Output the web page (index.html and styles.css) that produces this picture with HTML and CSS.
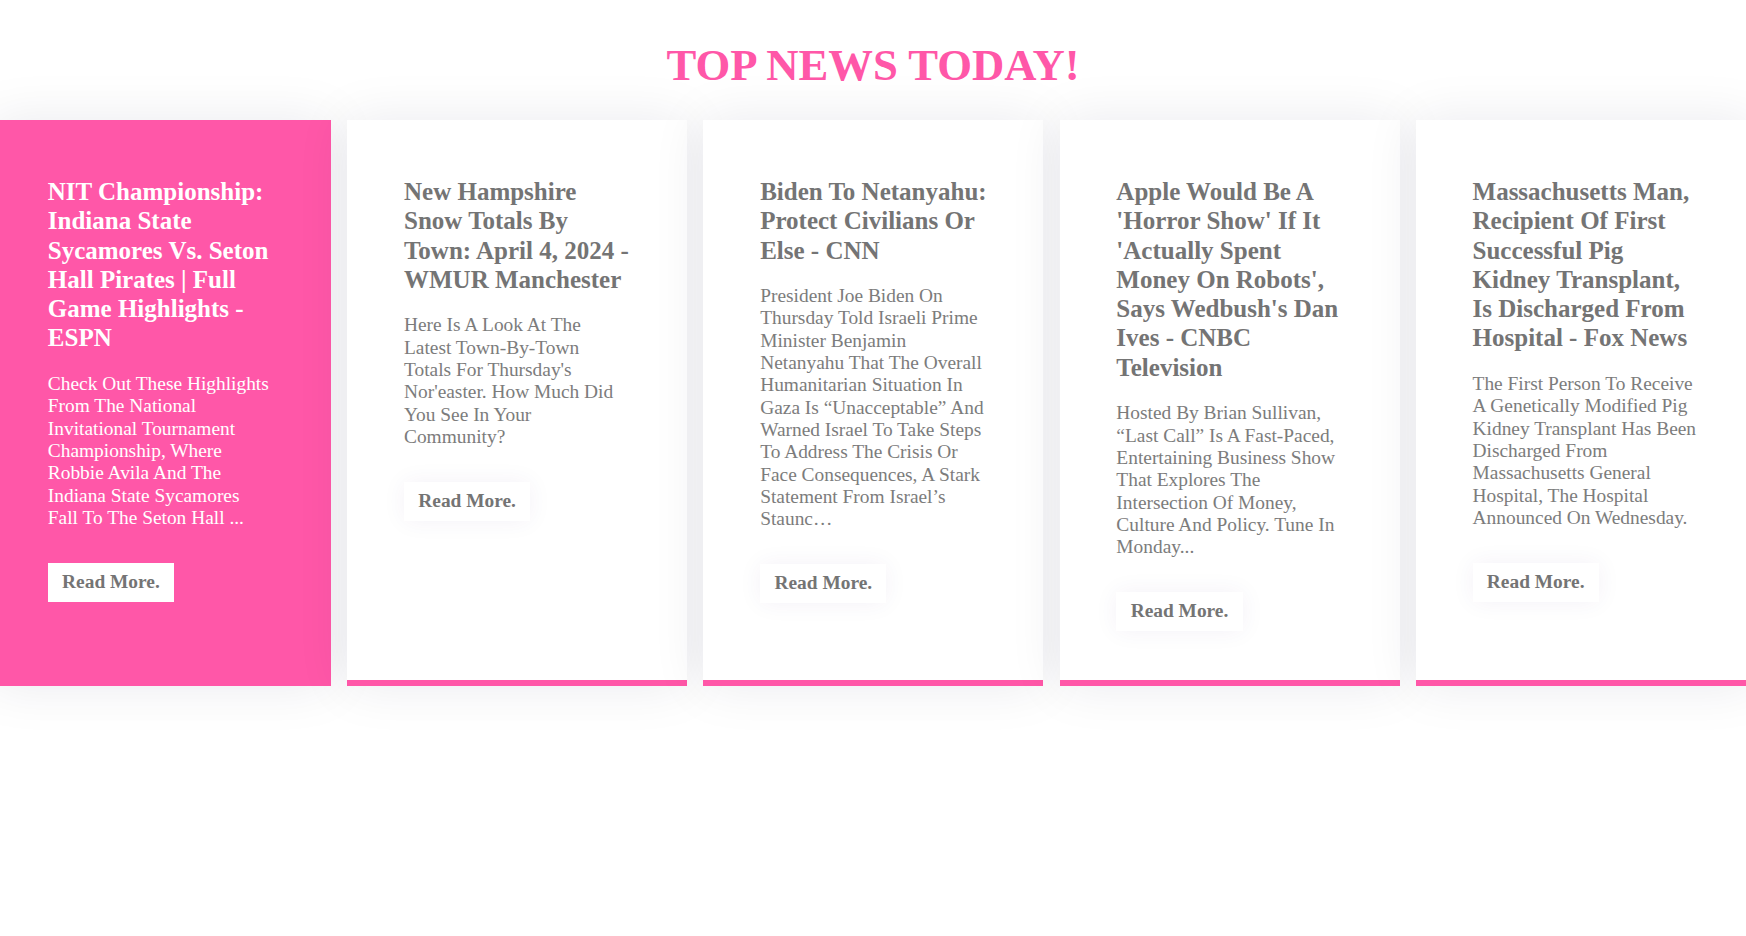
FILE: index.html
```html
<!DOCTYPE html>
<html lang="en">
<head>
<meta charset="utf-8">
<title>Top News Today</title>
<link rel="stylesheet" href="styles.css">
</head>
<body>
<main class="news">
  <h1 class="news-title">TOP NEWS TODAY!</h1>
  <div class="news-track">
    <article class="card card-active">
      <h2 class="card-title">NIT Championship: Indiana State Sycamores Vs. Seton Hall Pirates | Full Game Highlights - ESPN</h2>
      <p class="card-text">Check Out These Highlights From The National Invitational Tournament Championship, Where Robbie Avila And The Indiana State Sycamores Fall To The Seton Hall ...</p>
      <a class="card-btn" href="#">Read More.</a>
    </article>
    <article class="card">
      <h2 class="card-title">New Hampshire Snow Totals By Town: April 4, 2024 - WMUR Manchester</h2>
      <p class="card-text">Here Is A Look At The Latest Town-By-Town Totals For Thursday's Nor'easter. How Much Did You See In Your Community?</p>
      <a class="card-btn" href="#">Read More.</a>
    </article>
    <article class="card">
      <h2 class="card-title">Biden To Netanyahu: Protect Civilians Or Else - CNN</h2>
      <p class="card-text">President Joe Biden On Thursday Told Israeli Prime Minister Benjamin Netanyahu That The Overall Humanitarian Situation In Gaza Is “Unacceptable” And Warned Israel To Take Steps To Address The Crisis Or Face Consequences, A Stark Statement From Israel’s Staunc…</p>
      <a class="card-btn" href="#">Read More.</a>
    </article>
    <article class="card">
      <h2 class="card-title">Apple Would Be A 'Horror Show' If It 'Actually Spent Money On Robots', Says Wedbush's Dan Ives - CNBC Television</h2>
      <p class="card-text">Hosted By Brian Sullivan, “Last Call” Is A Fast-Paced, Entertaining Business Show That Explores The Intersection Of Money, Culture And Policy. Tune In Monday...</p>
      <a class="card-btn" href="#">Read More.</a>
    </article>
    <article class="card">
      <h2 class="card-title">Massachusetts Man, Recipient Of First Successful Pig Kidney Transplant, Is Discharged From Hospital - Fox News</h2>
      <p class="card-text">The First Person To Receive A Genetically Modified Pig Kidney Transplant Has Been Discharged From Massachusetts General Hospital, The Hospital Announced On Wednesday.</p>
      <a class="card-btn" href="#">Read More.</a>
    </article>
  </div>
</main>
</body>
</html>
```

FILE: styles.css
```css
html, body {
  margin: 0;
  padding: 0;
  background: #ffffff;
  overflow: hidden;
}

body {
  font-family: "Liberation Serif", "Times New Roman", serif;
  width: 1746px;
  height: 936px;
}

.news {
  display: flex;
  flex-direction: column;
}

.news-title {
  margin: 40px 0 30px;
  text-align: center;
  font-size: 44.7px;
  font-weight: 700;
  line-height: 50px;
  color: #ff57a8;
}

.news-track {
  display: flex;
  align-items: stretch;
  gap: 16.2px;
  margin-left: -8.9px;
}

.card {
  flex: 0 0 340px;
  box-sizing: border-box;
  display: flex;
  flex-direction: column;
  align-items: flex-start;
  padding: 57px 57px 49px 56.7px;
  background: #ffffff;
  border-bottom: 6px solid #ff57a8;
  box-shadow: 0 0 50px rgba(20, 20, 60, 0.085);
  color: #747474;
}

.card-active {
  background: #ff57a8;
  color: #ffffff;
}

.card-title {
  margin: 0 -5px 20.3px 0;
  font-size: 25px;
  font-weight: 700;
  line-height: 29.3px;
  color: inherit;
}

.card-text {
  margin: 0 0 33.6px;
  font-size: 19.4px;
  font-weight: 400;
  line-height: 22.3px;
  color: inherit;
}

.card:not(.card-active) .card-text {
  color: #7c7c7c;
}

.card-btn {
  display: inline-block;
  padding: 8.3px 14.3px;
  background: #ffffff;
  color: #747474;
  font-size: 19.4px;
  font-weight: 700;
  line-height: 22.3px;
  text-decoration: none;
  box-shadow: 0 0 24px rgba(60, 30, 120, 0.06);
}

.card-active .card-btn {
  box-shadow: none;
}
```
